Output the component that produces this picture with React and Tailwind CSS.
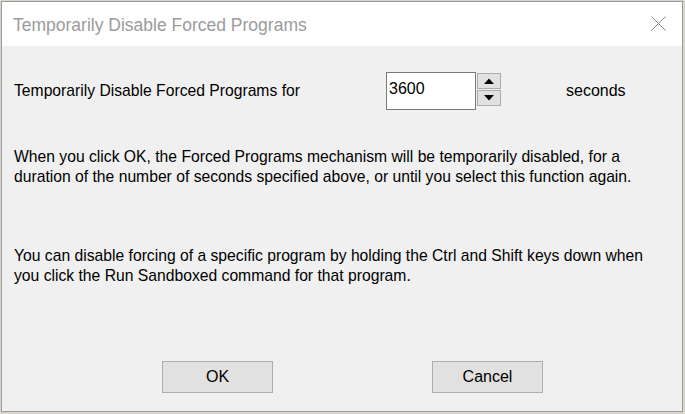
import React, { useState } from 'react';

const Arrow = ({ down }) => (
  <svg width="10" height="6" viewBox="0 0 10 6">
    {down ? <polygon points="0,0 10,0 5,5.5" fill="#000" /> : <polygon points="0,6 10,6 5,0.5" fill="#000" />}
  </svg>
);

const App = () => {
  const [seconds, setSeconds] = useState('3600');

  const bump = (d) => {
    const n = parseInt(seconds, 10) || 0;
    setSeconds(String(Math.max(0, n + d)));
  };

  return (
    <div className="w-[685px] h-[414px] bg-[#d9d7cd] pl-[1px] pt-[1px] overflow-hidden" style={{ fontFamily: '"Liberation Sans", Arial, sans-serif' }}>
      <div className="w-[682px] h-[411px] border border-[#9a9a9a] flex flex-col bg-[#f0f0f0]">
        {/* title bar */}
        <div className="h-[44px] bg-white flex items-center justify-between pl-[11px] pr-[16px] shrink-0">
          <span className="text-[17.5px] text-[#9b9b9b] pt-[3px]">Temporarily Disable Forced Programs</span>
          <svg width="15" height="15" viewBox="0 0 15 15" className="-mt-[1px]">
            <path d="M0.5 0.5 L14.5 14.5 M14.5 0.5 L0.5 14.5" stroke="#8a8a8a" strokeWidth="1" fill="none" />
          </svg>
        </div>

        {/* body */}
        <div className="flex-1 flex flex-col text-[15.7px] leading-[20px] text-black">
          <div className="flex items-center mt-[26px] pl-[12px]">
            <span className="w-[372px] whitespace-nowrap">Temporarily Disable Forced Programs for</span>
            <div className="w-[90px] h-[38px] bg-white border border-[#7a7a7a] pl-[2px] pt-[6px] text-[16px] leading-[20px]">{seconds}</div>
            <div className="flex flex-col gap-[1px] ml-[1px] self-start mt-[1px]">
              <button onClick={() => bump(1)} className="w-[24px] h-[16px] bg-[#e1e1e1] border border-[#adadad] flex items-center justify-center">
                <Arrow />
              </button>
              <button onClick={() => bump(-1)} className="w-[24px] h-[16px] bg-[#e1e1e1] border border-[#adadad] flex items-center justify-center">
                <Arrow down />
              </button>
            </div>
            <span className="ml-[65px] text-[16px]">seconds</span>
          </div>

          <p className="mt-[37px] pl-[12px] whitespace-nowrap">
            When you click OK, the Forced Programs mechanism will be temporarily disabled, for a
            <br />
            duration of the number of seconds specified above, or until you select this function again.
          </p>

          <p className="mt-[59px] pl-[12px] whitespace-nowrap">
            You can disable forcing of a specific program by holding the Ctrl and Shift keys down when
            <br />
            you click the Run Sandboxed command for that program.
          </p>

          <div className="mt-auto mb-[18px] flex pl-[160px] gap-[159px]">
            <button className="w-[111px] h-[32px] bg-[#e1e1e1] border border-[#adadad] text-[16px]">OK</button>
            <button className="w-[111px] h-[32px] bg-[#e1e1e1] border border-[#adadad] text-[16px]">Cancel</button>
          </div>
        </div>
      </div>
    </div>
  );
};

export default App;
